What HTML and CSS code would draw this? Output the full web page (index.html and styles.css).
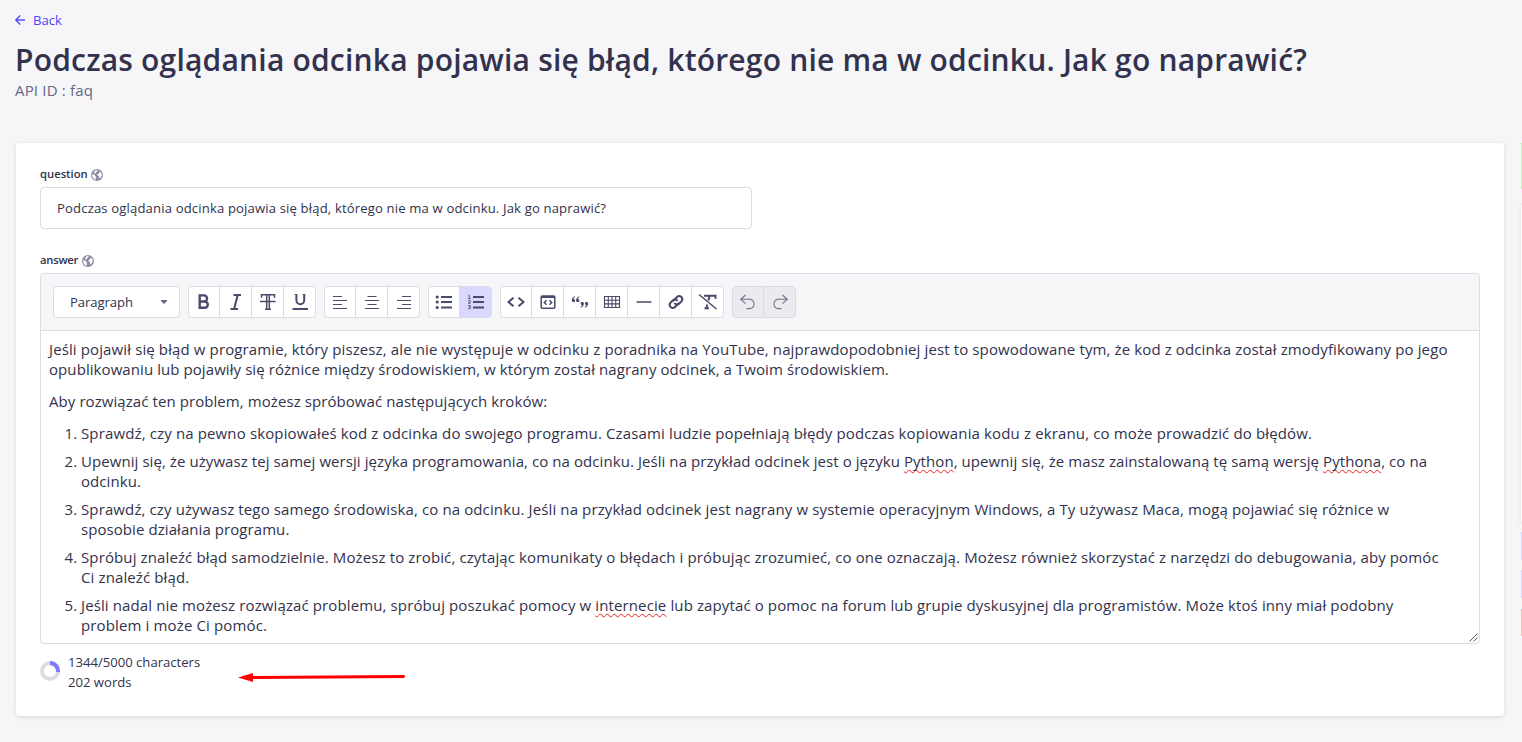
FILE: index.html
```
<!DOCTYPE html>
<html lang="pl">
<head>
<meta charset="utf-8">
<title>FAQ</title>
<link rel="stylesheet" href="styles.css">
</head>
<body>
<header class="head">
  <a class="back"><svg width="10" height="10" viewBox="0 0 10 10" fill="none" stroke="#5b52ff" stroke-width="1.5"><path d="M10 5H1M5.2.6.9 5l4.3 4.4"/></svg><span>Back</span></a>
  <h1 class="title">Podczas oglądania odcinka pojawia się błąd, którego nie ma w odcinku. Jak go naprawić?</h1>
  <p class="sub">API ID : faq</p>
</header>
<div class="cols">
<main class="card">
  <div class="label"><span class="lq">question</span><svg class="globe" viewBox="0 0 12 12"><circle cx="6" cy="6" r="6" fill="#8e8ea9"/><path id="land" d="M1.200 5 3.500 6l1.500 1.500-.5 1 .5 2.300C2.500 10.300 1 8.300 1.200 5zM4.500 1.300l2-.3-.3 1.300-1.400 1.200-.8 1.300-1-.6.5-1.500zM8.800 2.500l1.500 1.500.6 2-1 2-1.500 1.500-.6-1.200.4-1.300-1.500-.5-.2-1.500 1.500-.6z" fill="#fff"/></svg></div>
  <div class="input">Podczas oglądania odcinka pojawia się błąd, którego nie ma w odcinku. Jak go naprawić?</div>
  <div class="label second"><span class="la">answer</span><svg class="globe" viewBox="0 0 12 12"><circle cx="6" cy="6" r="6" fill="#8e8ea9"/><use href="#land"/></svg></div>
  <div class="editor">
    <div class="toolbar">
      <div class="select"><span>Paragraph</span><svg width="6" height="4" viewBox="0 0 6 4"><path d="M0 0h6v1L3 4 0 1z" fill="#666687"/></svg></div>
      <div class="group">
        <button><svg viewBox="0 0 32 32"><path d="M12.500 10.200h4.300a3 3 0 0 1 0 6.100h-4.300zm0 6.100h5a3.100 3.100 0 0 1 0 6.200h-5z" fill="none" stroke="#4a4a6a" stroke-width="2.400" transform="translate(-.8 -.8)"/></svg></button>
        <button><svg viewBox="0 0 32 32"><path d="M13.500 9H21M10.500 23H18M17.700 9l-3.600 14" class="s2"/></svg></button>
        <button><svg viewBox="0 0 32 32"><path d="M9.500 11.800V8.700h13v3.100M14.700 9v13.500M17.300 9v13.500M13 23.200h6" class="s15"/><path d="M8 15.500h15.500" stroke="#4a4a6a" stroke-width="1.300"/></svg></button>
        <button><svg viewBox="0 0 32 32"><path d="M12.400 8.500v5.800a3.900 3.900 0 0 0 7.800 0V8.500M8.500 23H24" class="s2"/><path d="M10.700 8.500h2.600M18.700 8.500h2.600" class="s1"/></svg></button>
      </div>
      <div class="group">
        <button><svg viewBox="0 0 32 32"><path d="M9 10.500h9M9 14.500h14M9 18.500h9M9 22.500h14" class="s1"/></svg></button>
        <button><svg viewBox="0 0 32 32"><path d="M11.500 10.500h9M9 14.500h14M11.500 18.500h9M9 22.500h14" class="s1"/></svg></button>
        <button><svg viewBox="0 0 32 32"><path d="M14 10.500h9M9 14.500h14M14 18.500h9M9 22.500h14" class="s1"/></svg></button>
      </div>
      <div class="group">
        <button><svg viewBox="0 0 32 32"><path d="M13 11h11M13 16h11M13 21.500h11" class="s2"/><g fill="#4a4a6a"><circle cx="9.200" cy="11" r="1.600"/><circle cx="9.200" cy="16" r="1.600"/><circle cx="9.200" cy="21.500" r="1.600"/></g></svg></button>
        <button class="on"><svg viewBox="0 0 32 32"><path d="M13 11h11M13 16h11M13 21.500h11" class="s2"/><path d="M8.300 9.300h1v3.200M8 12.700h2.800M8 14.700h2.300v1.200L8.200 17.300h2.500M8 19.500h2.300v3.200H8M8.500 21h1.800" fill="none" stroke="#4a4a6a" stroke-width=".8"/></svg></button>
      </div>
      <div class="group">
        <button><svg viewBox="0 0 32 32"><path d="m13.500 11.700-5 4.300 5 4.300M18.500 11.700l5 4.300-5 4.300" class="s2"/></svg></button>
        <button><svg viewBox="0 0 32 32"><rect x="9.200" y="10" width="13.600" height="12.300" rx="1" class="s15"/><path d="M9 11h14" class="s2"/><path d="m14.500 14.300-2.200 2.200 2.200 2.200M17.500 14.300l2.200 2.200-2.200 2.200" class="s15"/></svg></button>
        <button><svg viewBox="0 0 32 32" fill="#4a4a6a"><path id="q" d="M11 10.200c-2.200.7-3.200 2.300-3.200 4.200 0 1 .7 1.700 1.700 1.700s1.600-.7 1.600-1.600-.6-1.500-1.500-1.500c0-.8.6-1.400 1.600-1.900z"/><use href="#q" x="4.300"/><use href="#q" transform="rotate(180 16 16)"/><use href="#q" transform="rotate(180 16 16) translate(4.300)"/></svg></button>
        <button><svg viewBox="0 0 32 32"><path d="M8.500 10.500h15v11h-15zM8.500 14.200h15M8.500 17.900h15M12.300 10.500v11M16 10.500v11M19.700 10.500v11" class="s1"/></svg></button>
        <button><svg viewBox="0 0 32 32"><path d="M8.500 16h15" class="s15"/></svg></button>
        <button><svg viewBox="0 0 32 32"><g class="s2" transform="rotate(-45 16 16)"><path d="M17.500 18.800h-5.700a3.100 3.100 0 0 1 0-6.200h3a3.100 3.100 0 0 1 3 3.800"/><path d="M14.500 13.200h5.700a3.100 3.100 0 0 1 0 6.200h-3a3.100 3.100 0 0 1-3-3.800"/></g></svg></button>
        <button><svg viewBox="0 0 32 32"><path d="m7 8.500 17.500 14.500" class="s15"/><path d="M12 9.800h11.500v3M17.500 10l-1 4.500M15.300 18.500 14.500 22M12.500 22.300h4.500" class="s2"/></svg></button>
      </div>
      <div class="group off">
        <button><svg viewBox="0 0 32 32"><path d="m13.500 9-4.700 4.300 4.700 4.300M9 13.300h9a4.700 4.700 0 0 1 0 9.300h-3.500" class="s1"/></svg></button>
        <button><svg viewBox="0 0 32 32"><path d="m18.500 9 4.700 4.300-4.700 4.300M23 13.300h-9a4.700 4.700 0 0 0 0 9.300h3.500" class="s1"/></svg></button>
      </div>
    </div>
    <div class="content">
      <p><span class="t12">Jeśli pojawił się błąd w programie, który piszesz, ale nie występuje w odcinku z poradnika na YouTube, najprawdopodobniej jest to spowodowane tym, że kod z odcinka został zmodyfikowany po jego</span><br><span class="t08">opublikowaniu lub pojawiły się różnice między środowiskiem, w którym został nagrany odcinek, a Twoim środowiskiem.</span></p>
      <p><span class="t08">Aby rozwiązać ten problem, możesz spróbować następujących kroków:</span></p>
      <ol>
        <li><span class="t14">Sprawdź, czy na pewno skopiowałeś kod z odcinka do swojego programu. Czasami ludzie popełniają błędy podczas kopiowania kodu z ekranu, co może prowadzić do błędów.</span></li>
        <li><span class="t07">Upewnij się, że używasz tej samej wersji języka programowania, co na odcinku. Jeśli na przykład odcinek jest o języku <i class="sp">Python</i>, upewnij się, że masz zainstalowaną tę samą wersję <i class="sp">Pythona</i>, co na</span><br><span class="t07">odcinku.</span></li>
        <li><span class="t12">Sprawdź, czy używasz tego samego środowiska, co na odcinku. Jeśli na przykład odcinek jest nagrany w systemie operacyjnym Windows, a Ty używasz Maca, mogą pojawiać się różnice w</span><br><span class="t07">sposobie działania programu.</span></li>
        <li><span class="t12">Spróbuj znaleźć błąd samodzielnie. Możesz to zrobić, czytając komunikaty o błędach i próbując zrozumieć, co one oznaczają. Możesz również skorzystać z narzędzi do debugowania, aby pomóc</span><br><span class="t12">Ci znaleźć błąd.</span></li>
        <li><span class="t12">Jeśli nadal nie możesz rozwiązać problemu, spróbuj poszukać pomocy w <i class="sp">internecie</i> lub zapytać o pomoc na forum lub grupie dyskusyjnej dla programistów. Może ktoś inny miał podobny</span><br><span class="t14">problem i może Ci pomóc.</span></li>
      </ol>
      <svg class="grip" width="9" height="9" viewBox="0 0 9 9"><path d="M.5 8.500l8-8M4.500 8.500l4-4" stroke="#55555f" stroke-width="1"/></svg>
    </div>
  </div>
  <div class="count">
    <svg width="20" height="20" viewBox="0 0 20 20" fill="none" stroke-width="4"><circle cx="10" cy="10" r="8" stroke="#dcdce4"/><path d="M10 2a8 8 0 0 1 7.940 8.940" stroke="#7b79ff"/></svg>
    <div>1344/5000 characters<br>202 words</div>
    <svg class="arrow" width="170" height="12" viewBox="0 0 170 12"><path d="M13 6.500 165.500 5.500" stroke="#f00" stroke-width="3" stroke-linecap="round"/><path d="M0 6.500 15 2v9z" fill="#f00"/></svg>
  </div>
</main>
<aside class="side"><div class="s-green"></div><div class="s-panel"></div><div class="s-blue"></div><div class="s-blue"></div><div class="s-red"></div></aside>
</div>
</body>
</html>
```
FILE: styles.css
```
* { box-sizing: border-box; }
body { margin: 0; height: 742px; overflow: hidden; background: #f6f6f9; color: #32324d; font-family: "Open Sans", "Noto Sans", sans-serif; font-size: 15px; }
.head { padding: 10px 15px 0; height: 142px; }
.back { display: flex; align-items: center; gap: 8px; height: 20px; color: #4945ff; font-size: 13.1px; }
.title { margin: 10px 0 0; font-size: 30px; line-height: 40px; font-weight: 600; letter-spacing: .2px; white-space: nowrap; }
.sub { margin: 0; color: #666687; line-height: 20px; letter-spacing: .17px; }
.cols { display: flex; gap: 16px; padding-left: 16px; }
.card { flex: none; width: 1488px; height: 573px; margin-top: 1px; padding: 22px 24px; background: #fff; border-radius: 4px; box-shadow: 0 1px 4px rgba(33, 33, 52, .14); }
.label { display: flex; align-items: center; gap: 4px; height: 20px; font-size: 11.25px; line-height: 18px; font-weight: 600; }
.label span { padding-bottom: 2px; }
.lq { width: 47px; }
.la { width: 38px; letter-spacing: -.25px; }
.globe { width: 12px; height: 12px; }
.second { margin-top: 22px; }
.input { display: flex; align-items: center; width: 712px; height: 42px; margin-top: 2px; padding: 0 16px; border: 1px solid #dcdce4; border-radius: 4px; font-size: 13.1px; letter-spacing: .15px; white-space: nowrap; }
.editor { width: 1440px; height: 371px; margin-top: 2px; border: 1px solid #dcdce4; border-radius: 4px; overflow: hidden; }
.toolbar { display: flex; align-items: center; gap: 8px; height: 57px; padding: 0 12px; background: #f6f6f9; border-bottom: 1px solid #dcdce4; }
.select { display: flex; align-items: center; justify-content: space-between; width: 127px; height: 32px; padding: 0 12px 0 16px; border: 1px solid #dcdce4; border-radius: 4px; background: #fff; font-size: 13.1px; letter-spacing: -.07px; }
.group { display: flex; height: 32px; border: 1px solid #dcdce4; border-radius: 4px; background: #fff; overflow: hidden; }
.group button { width: 32px; height: 30px; padding: 0; border: 0; border-right: 1px solid #dcdce4; background: none; overflow: hidden; }
.group button:last-child { width: 31px; border-right: 0; }
.group button:first-child { width: 31px; }
.group svg { display: block; width: 32px; height: 32px; margin: -1px 0 0; }
.group button:first-child svg { margin-left: -1px; }
.group .on { background: #d9d8ff; }
.group.off { background: #eaeaef; }
.off svg { opacity: .75; }
.s1, .s15, .s2 { fill: none; stroke: #4a4a6a; stroke-width: 1.1; }
.s15 { stroke-width: 1.5; }
.s2 { stroke-width: 2; }
.content { position: relative; height: 313px; padding: 8px 8px; line-height: 20px; white-space: nowrap; }
.content p { margin: 0 0 12px; }
.content ol { margin: 0; padding-left: 32px; }
.content li { margin-bottom: 8px; }
.t07 { letter-spacing: .07px; }
.t08 { letter-spacing: .076px; }
.t12 { letter-spacing: .118px; }
.t14 { letter-spacing: .137px; }
.sp { font-style: normal; text-decoration: underline wavy #f02020 1.3px; text-underline-offset: 2px; text-decoration-skip-ink: none; }
.grip { position: absolute; right: 1px; bottom: 2px; }
.count { display: flex; gap: 8px; margin-top: 8px; font-size: 13.1px; line-height: 20px; }
.count > svg { margin-top: 9px; }
.count > div { width: 162px; }
.count > .arrow { margin-top: 19px; }
.side { flex: none; width: 6px; margin-left: 1px; }
.s-green { height: 46px; margin-top: 1px; background: #c6f0c2; }
.s-panel { height: 317px; margin-top: 16px; background: #fff; box-shadow: 0 1px 4px rgba(33, 33, 52, .14); }
.s-blue { height: 28px; margin-top: 10px; background: #d9d8ff; }
.s-red { height: 27px; margin-top: 11px; background: #f5c0b8; }
```
